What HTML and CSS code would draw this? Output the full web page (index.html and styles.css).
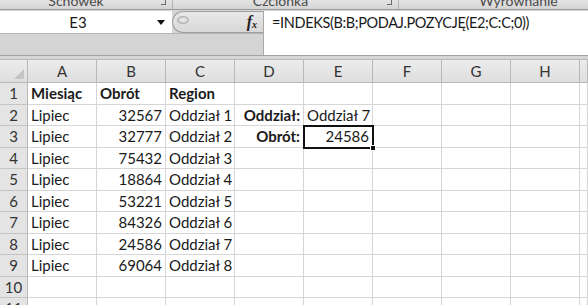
FILE: index.html
```html
<!DOCTYPE html>
<html lang="pl">
<head>
    <meta charset="UTF-8">
    <title>Arkusz - INDEKS / PODAJ.POZYCJĘ</title>
    <link rel="stylesheet" href="styles.css">
</head>
<body>
    <div class="ribbon-labels">
        <div class="group group-clip"><span>Schowek</span><i class="launcher"></i></div>
        <div class="group group-font"><span>Czcionka</span><i class="launcher"></i></div>
        <div class="group group-align"><span>Wyrównanie</span></div>
    </div>

    <div class="formula-bar">
        <div class="fb-left">
            <div class="fb-top">
                <div class="name-box">E3<i class="drop"></i></div>
                <div class="fx-pill">
                    <span class="grip"></span>
                    <span class="fx">f<sub>x</sub></span>
                </div>
            </div>
            <div class="fb-fill"></div>
        </div>
        <div class="formula-input">=INDEKS(B:B;PODAJ.POZYCJĘ(E2;C:C;0))</div>
    </div>

    <div class="sheet">
        <div class="hd corner"></div>
        <div class="hd">A</div><div class="hd">B</div><div class="hd">C</div><div class="hd">D</div>
        <div class="hd">E</div><div class="hd">F</div><div class="hd">G</div><div class="hd">H</div><div class="hd"></div>

        <div class="rh">1</div>
        <div class="c b">Miesiąc</div><div class="c b">Obrót</div><div class="c b">Region</div><div class="c"></div>
        <div class="c"></div><div class="c"></div><div class="c"></div><div class="c"></div><div class="c"></div>

        <div class="rh">2</div>
        <div class="c">Lipiec</div><div class="c n">32567</div><div class="c">Oddział 1</div><div class="c b n">Oddział:</div>
        <div class="c">Oddział 7</div><div class="c"></div><div class="c"></div><div class="c"></div><div class="c"></div>

        <div class="rh">3</div>
        <div class="c">Lipiec</div><div class="c n">32777</div><div class="c">Oddział 2</div><div class="c b n">Obrót:</div>
        <div class="c n active">24586<i class="handle"></i></div><div class="c"></div><div class="c"></div><div class="c"></div><div class="c"></div>

        <div class="rh">4</div>
        <div class="c">Lipiec</div><div class="c n">75432</div><div class="c">Oddział 3</div><div class="c"></div>
        <div class="c"></div><div class="c"></div><div class="c"></div><div class="c"></div><div class="c"></div>

        <div class="rh">5</div>
        <div class="c">Lipiec</div><div class="c n">18864</div><div class="c">Oddział 4</div><div class="c"></div>
        <div class="c"></div><div class="c"></div><div class="c"></div><div class="c"></div><div class="c"></div>

        <div class="rh">6</div>
        <div class="c">Lipiec</div><div class="c n">53221</div><div class="c">Oddział 5</div><div class="c"></div>
        <div class="c"></div><div class="c"></div><div class="c"></div><div class="c"></div><div class="c"></div>

        <div class="rh">7</div>
        <div class="c">Lipiec</div><div class="c n">84326</div><div class="c">Oddział 6</div><div class="c"></div>
        <div class="c"></div><div class="c"></div><div class="c"></div><div class="c"></div><div class="c"></div>

        <div class="rh">8</div>
        <div class="c">Lipiec</div><div class="c n">24586</div><div class="c">Oddział 7</div><div class="c"></div>
        <div class="c"></div><div class="c"></div><div class="c"></div><div class="c"></div><div class="c"></div>

        <div class="rh">9</div>
        <div class="c">Lipiec</div><div class="c n">69064</div><div class="c">Oddział 8</div><div class="c"></div>
        <div class="c"></div><div class="c"></div><div class="c"></div><div class="c"></div><div class="c"></div>

        <div class="rh">10</div>
        <div class="c"></div><div class="c"></div><div class="c"></div><div class="c"></div>
        <div class="c"></div><div class="c"></div><div class="c"></div><div class="c"></div><div class="c"></div>

        <div class="rh">11</div>
        <div class="c"></div><div class="c"></div><div class="c"></div><div class="c"></div>
        <div class="c"></div><div class="c"></div><div class="c"></div><div class="c"></div><div class="c"></div>
    </div>
</body>
</html>
```

FILE: styles.css
```css
* {
    margin: 0;
    padding: 0;
    box-sizing: border-box;
}

body {
    font-family: Lato, 'Liberation Sans', sans-serif;
    font-size: 15px;
    color: #1a1a1a;
    background: #d6d6d6;
    width: 588px;
    height: 305px;
    overflow: hidden;
}

/* Ribbon group captions, cut off at the top */
.ribbon-labels {
    height: 10px;
    display: flex;
    overflow: hidden;
    background: linear-gradient(#e4e4e4, #d4d4d4);
    border-bottom: 1px solid #9a9a9a;
}

.group {
    position: relative;
    display: flex;
    justify-content: center;
    border-right: 1px solid #b4b4b4;
    font-size: 14px;
    line-height: 14px;
    color: #4a4a4a;
}

.group span {
    margin-top: -6px;
}

.group-clip { width: 173px; padding-right: 20px; }
.group-font { width: 226px; padding-right: 10px; }
.group-align { flex: 1; border-right: none; padding-left: 50px; }

.launcher {
    position: absolute;
    right: 6px;
    top: 0;
    width: 5px;
    height: 5px;
    border-right: 1px solid #6a6a6a;
    border-bottom: 1px solid #6a6a6a;
}

/* Formula bar */
.formula-bar {
    display: flex;
    height: 46px;
    padding-top: 1px;
    background: #d6d6d6;
    border-bottom: 1px solid #a4a4a4;
}

.fb-left {
    width: 263px;
    display: flex;
    flex-direction: column;
}

.fb-top {
    display: flex;
    height: 22px;
}

.name-box {
    width: 172px;
    background: #fff;
    display: flex;
    align-items: center;
    justify-content: center;
    position: relative;
    font-size: 15px;
    padding-right: 16px;
}

.drop {
    position: absolute;
    right: 7px;
    top: 9px;
    border-left: 4px solid transparent;
    border-right: 4px solid transparent;
    border-top: 5px solid #111;
}

.fx-pill {
    flex: 1;
    display: flex;
    align-items: center;
    justify-content: space-between;
    padding: 0 6px 0 4px;
    background: linear-gradient(#e8e8e8, #d8d8d8);
    border: 1px solid #a0a0a0;
    border-right: none;
    border-radius: 11px 0 0 11px;
}

.grip {
    width: 12px;
    height: 8px;
    margin-top: -4px;
    border-radius: 50%;
    background: radial-gradient(#f4f4f4, #bcbcbc);
    border: 1px solid #b0b0b0;
}

.fx {
    font-family: 'Liberation Serif', serif;
    font-style: italic;
    font-weight: bold;
    font-size: 16px;
    color: #222;
}

.fx sub {
    font-size: 10px;
    vertical-align: -1px;
}

.fb-fill {
    flex: 1;
    background: #d4d4d4;
    border-top: 1px solid #b4b4b4;
}

.formula-input {
    flex: 1;
    background: #fff;
    border-left: 1px solid #a8a8a8;
    padding: 3px 0 0 8px;
    font-size: 14.5px;
    letter-spacing: -0.35px;
}

/* Worksheet grid */
.sheet {
    margin-top: 3px;
    display: grid;
    grid-template-columns: 28px repeat(8, 69px) 1fr;
    grid-template-rows: 23px;
    grid-auto-rows: 21.5px;
    background: #fff;
    border-top: 1px solid #b8b8b8;
}

.hd,
.rh {
    background: linear-gradient(#ececec, #dedede);
    border-right: 1px solid #b8b8b8;
    border-bottom: 1px solid #b8b8b8;
    display: flex;
    align-items: center;
    justify-content: center;
    color: #333;
    font-size: 15px;
}

.rh {
    background: #e4e4e4;
    border-bottom-color: #c4c4c4;
}

.corner {
    position: relative;
}

.corner::after {
    content: "";
    position: absolute;
    right: 3px;
    bottom: 3px;
    border-left: 10px solid transparent;
    border-bottom: 10px solid #c4c4c4;
}

.c {
    border-right: 1px solid #d6d6d6;
    border-bottom: 1px solid #d6d6d6;
    padding: 0 3px;
    display: flex;
    align-items: center;
    white-space: nowrap;
    font-size: 15px;
}

.b { font-weight: bold; }
.n { justify-content: flex-end; }

.active {
    position: relative;
    outline: 2px solid #111;
    outline-offset: -1px;
}

.handle {
    position: absolute;
    right: -4px;
    bottom: -4px;
    width: 6px;
    height: 6px;
    background: #111;
    border: 1px solid #fff;
}
```
